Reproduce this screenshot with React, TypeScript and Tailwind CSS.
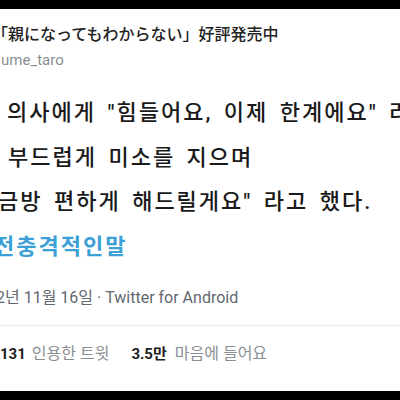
import React from "react";

export default function App() {
  const kr = { fontFamily: "Roboto, 'Noto Sans CJK KR', sans-serif" };
  const jp = { fontFamily: "Roboto, 'Noto Sans CJK JP', sans-serif" };
  return (
    <div className="w-[400px] h-[400px] bg-white flex flex-col overflow-hidden">
      <div className="h-[9px] bg-black shrink-0" />
      <div className="pt-[16px] flex flex-col overflow-hidden">
        <div
          className="-ml-[8px] text-[16px] leading-[20px] text-[#222] font-medium whitespace-nowrap"
          style={jp}
        >
          「親になってもわからない」好評発売中
        </div>
        <div
          className="mt-[6px] ml-[1px] text-[15px] leading-[18px] text-[#8a8f94] whitespace-nowrap"
          style={kr}
        >
          ume_taro
        </div>
        <div
          className="mt-[22px] text-[22px] leading-[44px] tracking-[2px] [word-spacing:4px] text-[#1a1a1a] font-medium whitespace-nowrap"
          style={kr}
        >
          <div className="ml-[7px]">의사에게 "힘들어요, 이제 한계에요" 라고 했더니</div>
          <div className="ml-[8px] mt-[1px]">부드럽게 미소를 지으며</div>
          <div className="-ml-[2px]">금방 편하게 해드릴게요" 라고 했다.</div>
          <div className="-ml-[6px] mt-[1px] font-bold text-[#3aa0d6]">전충격적인말</div>
        </div>
        <div
          className="mt-[19px] -ml-[4px] text-[16px] leading-[20px] text-[#5f6870] whitespace-nowrap"
          style={kr}
        >
          2년 11월 16일 · Twitter for Android
        </div>
        <div className="mt-[17px] h-px bg-[#ececec]" />
        <div
          className="mt-[18px] flex items-center gap-[22px] leading-[20px] whitespace-nowrap"
          style={kr}
        >
          <span>
            <span className="text-[15px] font-bold text-[#222]">131</span>
            <span className="ml-[6px] text-[16px] text-[#8a8f94]">인용한 트윗</span>
          </span>
          <span>
            <span className="text-[15px] font-bold text-[#222]">3.5만</span>
            <span className="ml-[8px] text-[16px] text-[#8a8f94]">마음에 들어요</span>
          </span>
        </div>
      </div>
      <div className="flex-1" />
      <div className="h-[9px] bg-black shrink-0" />
    </div>
  );
}
